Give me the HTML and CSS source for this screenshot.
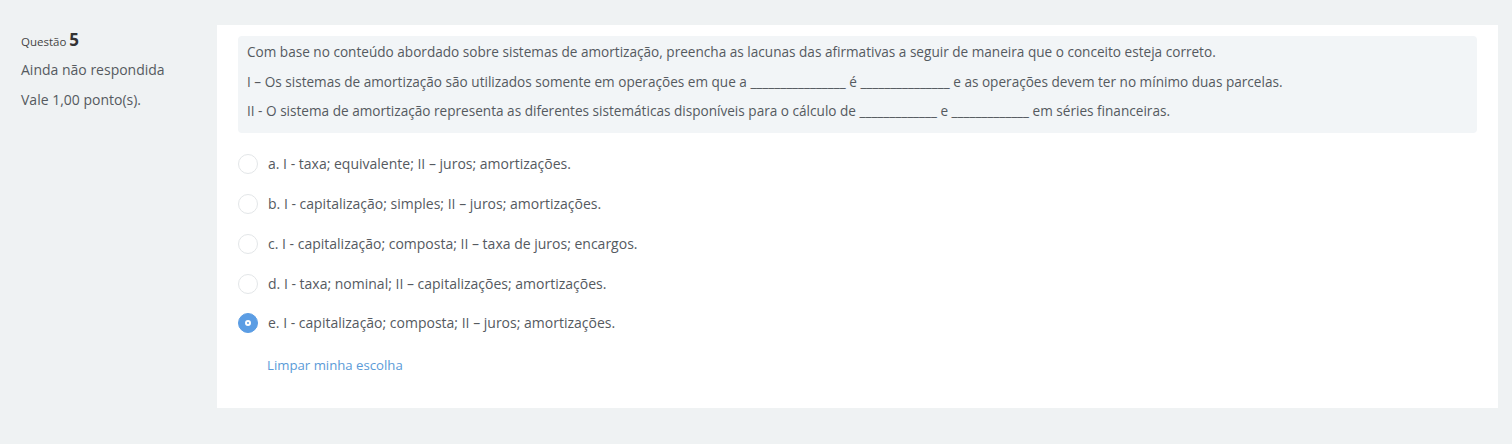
FILE: index.html
```html
<!DOCTYPE html>
<html lang="pt-BR">
<head>
<meta charset="utf-8">
<title>Questão 5</title>
<link rel="stylesheet" href="styles.css">
</head>
<body>
<div class="que">
  <div class="info">
    <h3 class="no">Questão <span class="qno">5</span></h3>
    <div class="state">Ainda não respondida</div>
    <div class="grade">Vale 1,00 ponto(s).</div>
  </div>
  <div class="content">
    <div class="qtext">
      <p>Com base no conteúdo abordado sobre sistemas de amortização, preencha as lacunas das afirmativas a seguir de maneira que o conceito esteja correto.</p>
      <p>I – Os sistemas de amortização são utilizados somente em operações em que a ________________ é _______________ e as operações devem ter no mínimo duas parcelas.</p>
      <p>II - O sistema de amortização representa as diferentes sistemáticas disponíveis para o cálculo de _____________ e _____________ em séries financeiras.</p>
    </div>
    <div class="answer">
      <label class="opt"><span class="radio"></span><span class="lbl">a. I - taxa; equivalente; II – juros; amortizações.</span></label>
      <label class="opt"><span class="radio"></span><span class="lbl">b. I - capitalização; simples; II – juros; amortizações.</span></label>
      <label class="opt"><span class="radio"></span><span class="lbl">c. I - capitalização; composta; II – taxa de juros; encargos.</span></label>
      <label class="opt"><span class="radio"></span><span class="lbl">d. I - taxa; nominal; II – capitalizações; amortizações.</span></label>
      <label class="opt"><span class="radio checked"></span><span class="lbl">e. I - capitalização; composta; II – juros; amortizações.</span></label>
    </div>
    <a class="clear" href="#">Limpar minha escolha</a>
  </div>
</div>
</body>
</html>
```
FILE: styles.css
```css
html, body {
  margin: 0;
  padding: 0;
  background: #eff2f3;
  font-family: "Open Sans", "Liberation Sans", sans-serif;
  color: #555a5f;
  font-size: 14px;
}
.que {
  display: flex;
  align-items: flex-start;
  padding: 25px 14px 0 0;
}
.info {
  width: 196px;
  padding: 4px 0 0 21px;
  flex: none;
}
.no {
  margin: 0;
  font-weight: normal;
  font-size: 11.5px;
  line-height: 22px;
  color: #444;
}
.qno {
  font-size: 17px;
  font-weight: 700;
  color: #333;
}
.state {
  margin-top: 7px;
  line-height: 20px;
}
.grade {
  margin-top: 10px;
  line-height: 20px;
}
.content {
  flex: 1;
  background: #fff;
  padding: 11px 21px 34px 21px;
}
.qtext {
  background: #f2f5f7;
  border-radius: 4px;
  padding: 6px 9px 2px;
  font-size: 13.6px;
}
.qtext p {
  margin: 0 0 10px;
  line-height: 19.5px;
}
.answer {
  margin-top: 12px;
  display: flex;
  flex-direction: column;
}
.opt {
  display: flex;
  align-items: center;
  gap: 10px;
  height: 39.75px;
}
.radio {
  width: 18px;
  height: 18px;
  border: 1px solid #e3e6e8;
  border-radius: 50%;
  background: #fff;
  flex: none;
  position: relative;
}
.radio.checked {
  background: #5b9de4;
  border-color: #5b9de4;
}
.radio.checked::after {
  content: "";
  position: absolute;
  left: 6px;
  top: 6px;
  width: 2px;
  height: 2px;
  border: 2px solid #fff;
  border-radius: 50%;
  background: #5b9de4;
}
.lbl {
  line-height: 20px;
}
.clear {
  display: inline-block;
  margin: 13px 0 0 29px;
  color: #5b9bd8;
  text-decoration: none;
  font-size: 13.2px;
  line-height: 18px;
}
```
